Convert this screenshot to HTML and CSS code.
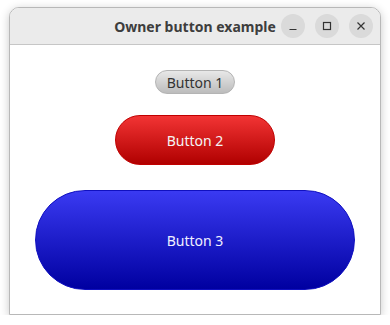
FILE: index.html
```html
<!DOCTYPE html>
<html lang="en">
<head>
    <meta charset="UTF-8">
    <title>Owner button example</title>
    <link rel="stylesheet" href="styles.css">
</head>
<body>
    <div class="window">
        <div class="titlebar">
            <span class="title">Owner button example</span>
            <div class="controls">
                <span class="ctl">
                    <svg width="10" height="10" viewBox="0 0 10 10"><path d="M1.5 8.5h7" stroke="#333" stroke-width="1.2"/></svg>
                </span>
                <span class="ctl">
                    <svg width="10" height="10" viewBox="0 0 10 10"><rect x="1.5" y="1.5" width="7" height="7" fill="none" stroke="#333" stroke-width="1.2"/></svg>
                </span>
                <span class="ctl">
                    <svg width="10" height="10" viewBox="0 0 10 10"><path d="M1.5 1.5l7 7M8.5 1.5l-7 7" stroke="#333" stroke-width="1.2"/></svg>
                </span>
            </div>
        </div>
        <div class="content">
            <button class="btn btn-gray">Button 1</button>
            <button class="btn btn-red">Button 2</button>
            <button class="btn btn-blue">Button 3</button>
        </div>
    </div>
</body>
</html>
```

FILE: styles.css
```css
body {
    margin: 0;
    background: #ffffff;
    font-family: "Noto Sans", "DejaVu Sans", sans-serif;
}

.window {
    margin: 7px 0 0 9px;
    width: 370px;
    height: 306px;
    border: 1px solid #b8b8b8;
    border-radius: 10px 10px 0 0;
    background: #fff;
    box-shadow: 0 2px 10px rgba(0, 0, 0, 0.22);
    overflow: hidden;
}

.titlebar {
    position: relative;
    height: 36px;
    background: #ebebeb;
    border-bottom: 1px solid #c6c6c6;
    display: flex;
    align-items: center;
    justify-content: center;
}

.title {
    font-weight: bold;
    font-size: 14px;
    color: #3d3d3d;
    margin-left: 0;
}

.controls {
    position: absolute;
    right: 7px;
    top: 6px;
    display: flex;
    gap: 10px;
}

.ctl {
    width: 24px;
    height: 24px;
    border-radius: 50%;
    background: #dadada;
    display: flex;
    align-items: center;
    justify-content: center;
}

.content {
    display: flex;
    flex-direction: column;
    align-items: center;
    padding-top: 25px;
}

.btn {
    font-family: "Noto Sans", "DejaVu Sans", sans-serif;
    font-size: 14px;
    border: 1px solid transparent;
    padding: 0;
    cursor: pointer;
}

.btn-gray {
    width: 80px;
    height: 24px;
    border-radius: 12px;
    border-color: #b4b4b4;
    color: #333;
    background: linear-gradient(#e8e8e8, #bcbcbc);
}

.btn-red {
    margin-top: 21px;
    width: 160px;
    height: 50px;
    border-radius: 25px;
    border-color: #c00000;
    color: #f4f4f4;
    background: linear-gradient(#f23434, #b00000);
}

.btn-blue {
    margin-top: 25px;
    width: 320px;
    height: 100px;
    border-radius: 50px;
    border-color: #1010c0;
    color: #f0f0ff;
    background: linear-gradient(#3a3af2, #0000a0);
}
```
